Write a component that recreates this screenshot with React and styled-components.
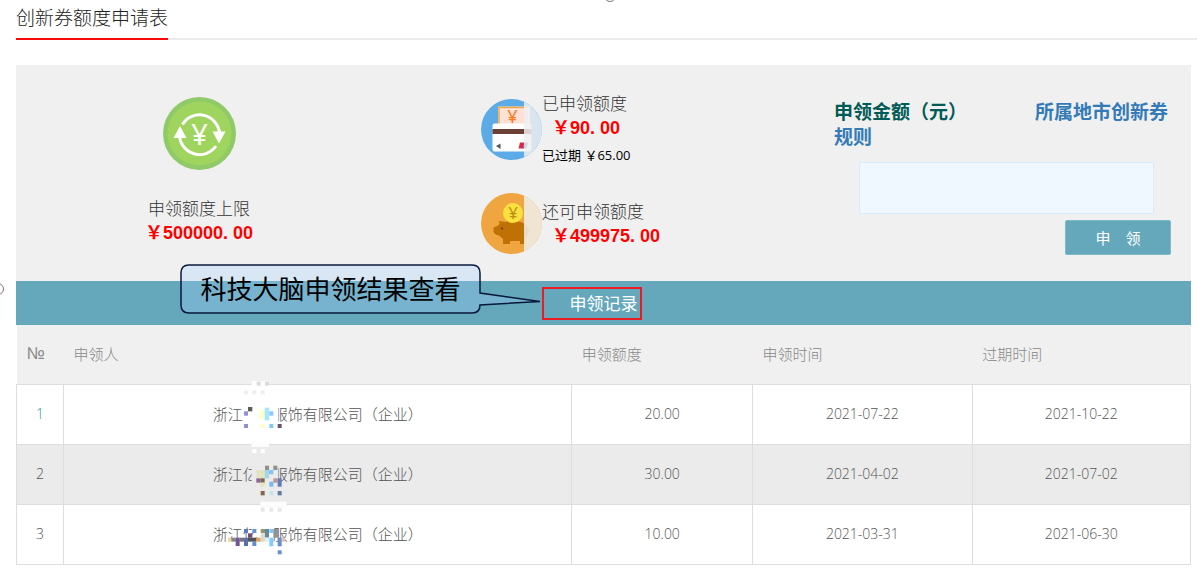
import React, { useState } from "react";
import styled, { createGlobalStyle } from "styled-components";

const records = [
    { id: 1, prefix: "浙江", hidden: 2, amount: "20.00", applied: "2021-07-22", expires: "2021-10-22" },
    { id: 2, prefix: "浙江亿", hidden: 1, amount: "30.00", applied: "2021-04-02", expires: "2021-07-02" },
    { id: 3, prefix: "浙江亿", hidden: 1, amount: "10.00", applied: "2021-03-31", expires: "2021-06-30" },
];

// pixel blocks that hide part of the company name: [x, y, width, height, colour]
const mosaics = {
    1: [
        [71, 0, 52, 18, "#fdfdfd"], [45, 74, 106, 68, "#ffffff"],
        [86, 2, 12, 12, "#dcdcdc"], [111, 2, 12, 12, "#dcdcdc"],
        [48, 28, 12, 12, "#efefef"], [73, 28, 12, 12, "#efefef"], [98, 28, 12, 12, "#efefef"],
        [60, 78, 13, 13, "#5c5c5c"], [48, 91, 12, 13, "#8f8fd4"],
        [86, 80, 12, 38, "#fffff0"], [98, 90, 12, 22, "#ffffc4"], [110, 80, 14, 38, "#a8e6ff"],
        [124, 91, 12, 13, "#86c8ff"], [48, 129, 12, 12, "#8f8fd4"], [98, 129, 12, 12, "#ffffc4"],
        [124, 129, 12, 12, "#7fc8ff"], [149, 129, 12, 12, "#67547c"], [71, 183, 52, 15, "#fdfdfd"],
    ],
    2: [
        [71, 0, 52, 14, "#fdfdfd"], [71, 70, 80, 64, "#ebebeb"],
        [73, 24, 12, 12, "#ffffff"], [98, 24, 12, 12, "#ffffff"],
        [111, 74, 12, 13, "#909090"], [136, 74, 12, 13, "#909090"], [85, 87, 25, 25, "#e4e4c0"],
        [110, 87, 13, 25, "#a5d6e8"], [123, 87, 13, 13, "#88c4f0"],
        [85, 112, 13, 13, "#8e6494"], [98, 112, 12, 13, "#7d6553"], [98, 125, 12, 12, "#e9e5b5"],
        [136, 112, 13, 13, "#bd9595"], [149, 112, 12, 25, "#657ab8"], [124, 122, 12, 15, "#75b9ee"],
        [98, 150, 12, 13, "#80664f"], [124, 150, 12, 13, "#c6e5e9"], [149, 150, 12, 13, "#5d7da1"],
        [98, 186, 77, 12, "#f8f8f8"],
    ],
    3: [
        [98, 2, 77, 14, "#fdfdfd"], [71, 76, 22, 12, "#fdfdfd"],
        [98, 20, 12, 12, "#e8e8e8"], [124, 20, 12, 12, "#e8e8e8"], [149, 20, 12, 12, "#e8e8e8"],
        [48, 84, 12, 12, "#587cc0"], [73, 84, 12, 12, "#6b91d4"], [98, 84, 13, 12, "#939776"],
        [111, 84, 12, 26, "#648999"], [124, 84, 12, 12, "#7cc8ff"], [136, 84, 14, 26, "#929292"],
        [60, 97, 13, 13, "#714d79"], [0, 110, 10, 12, "#f2d596"], [10, 110, 13, 12, "#858585"],
        [23, 110, 12, 25, "#71549a"], [35, 110, 13, 12, "#777779"], [48, 110, 12, 25, "#596faf"],
        [60, 110, 25, 12, "#535353"], [73, 122, 12, 13, "#648cd0"], [85, 110, 13, 12, "#e59d58"],
        [98, 97, 13, 25, "#dcdacb"], [111, 110, 13, 12, "#e3eef5"], [124, 110, 12, 26, "#83cbff"],
        [149, 110, 12, 26, "#688dd0"], [161, 110, 10, 12, "#e9c1a5"], [149, 148, 12, 12, "#6a8fcf"],
    ],
};

const Mosaic = ({ id, hidden }) => (
    <Hidden $chars={hidden}>
        <MosaicSvg $chars={hidden} viewBox="0 0 192 198" aria-hidden="true">
            {mosaics[id].map(([x, y, w, h, fill], index) => (
                <rect key={index} x={x} y={y} width={w} height={h} fill={fill} />
            ))}
        </MosaicSvg>
    </Hidden>
);

const LimitIcon = () => (
    <svg width="73" height="73" viewBox="0 0 73 73" aria-hidden="true">
        <circle cx="36.5" cy="36.5" r="36.5" fill="#90c968" />
        <circle cx="36.5" cy="36.5" r="32" fill="#9fd55e" />
        <g fill="none" stroke="#fff" strokeWidth="3">
            <path d="M19.5 27.5A20 20 0 0 1 56.5 36" />
            <path d="M16.7 40A20 20 0 0 0 53 49" />
        </g>
        <path d="M17 29L23.5 41H10.5Z M49.5 34.5H62.5L56 46.5Z" fill="#fff" />
        <text x="36.5" y="48" textAnchor="middle" fontFamily="Noto Sans" fontSize="29" fill="#fff">¥</text>
    </svg>
);

const CardIcon = () => (
    <svg width="61" height="61" viewBox="0 0 61 61" aria-hidden="true">
        <circle cx="30.5" cy="30.5" r="30.5" fill="#5dabe6" />
        <rect x="17" y="7.500" width="32" height="20" fill="#fbe9df" />
        <path d="M18 26V8.500H48" fill="none" stroke="#f3a53f" strokeWidth="1.500" />
        <rect x="20" y="10.500" width="27" height="15" fill="#fde0d6" />
        <text x="31.500" y="24" textAnchor="middle" fontFamily="Noto Sans" fontSize="18" fill="#ff7a1f">¥</text>
        <rect x="11.500" y="24.500" width="39" height="28" rx="2" fill="#fff" />
        <rect x="11.500" y="30" width="39" height="5" fill="#6b4036" />
        <path d="M15 47L19.500 44.500V50Z" fill="#555" />
        <path d="M39 43.500H43.500L42 49.500H37.500Z" fill="#dc2744" />
        <path d="M43.500 43.500H47L45 49.500H42Z" fill="#235494" />
        <path d="M43 2.700A30.500 30.500 0 0 1 43 58.300Z" fill="#f0f0f0" opacity="0.84" />
    </svg>
);

const PigIcon = () => (
    <svg width="61" height="61" viewBox="0 0 61 61" aria-hidden="true">
        <circle cx="30.5" cy="30.5" r="30.5" fill="#f0a640" />
        <g fill="#c07106">
            <path d="M18 28L24 29Q28 27.500 34 28Q45 29 46.500 35Q49 41 44 46V51H39V48H29V51H22V46L18 42.500Q14 42 12.500 39V34.500Q16 34 18.500 31Z" />
            <circle cx="46" cy="38" r="2" />
        </g>
        <circle cx="21" cy="35.500" r="1.200" fill="#7f4800" />
        <circle cx="32" cy="20" r="10" fill="#fbe13f" />
        <text x="32" y="26" textAnchor="middle" fontFamily="Noto Sans" fontSize="17" fill="#c08b13">¥</text>
        <path d="M43 2.700A30.500 30.500 0 0 1 43 58.300Z" fill="#f0f0f0" opacity="0.84" />
    </svg>
);

const App = () => {
    const [amount, setAmount] = useState("");

    const handleSubmit = (e) => {
        e.preventDefault();
    };

    return (
        <>
            <GlobalStyle />
            <Page>
                <Header>
                    <Title>创新券额度申请表</Title>
                </Header>
                <Main>
                    <Summary>
                        <Limit>
                            <LimitIcon />
                            <LimitText>
                                <Caption>申领额度上限</Caption>
                                <Money>￥500000. 00</Money>
                            </LimitText>
                        </Limit>
                        <Quotas>
                            <Quota>
                                <CardIcon />
                                <div>
                                    <Caption>已申领额度</Caption>
                                    <Money $indent>￥90. 00</Money>
                                    <Expired>已过期 ￥65.00</Expired>
                                </div>
                            </Quota>
                            <Quota>
                                <PigIcon />
                                <div>
                                    <Caption>还可申领额度</Caption>
                                    <Money $indent>￥499975. 00</Money>
                                </div>
                            </Quota>
                        </Quotas>
                        <Form onSubmit={handleSubmit}>
                            <FormTitle>
                                <label htmlFor="amount">申领金额（元）</label>
                                <RuleLink href="#rules">
                                    <span>所属地市创新券</span>
                                    <span>规则</span>
                                </RuleLink>
                            </FormTitle>
                            <AmountInput
                                id="amount"
                                type="text"
                                value={amount}
                                onChange={(e) => setAmount(e.target.value)}
                            />
                            <SubmitButton type="submit">申&emsp;领</SubmitButton>
                        </Form>
                    </Summary>
                    <Band>
                        <BandTitle>申领记录</BandTitle>
                        <Callout>
                            <CalloutShape viewBox="0 0 361 50" aria-hidden="true">
                                <path
                                    d="M9 1H292Q300 1 300 9V29L360 37.500L300 41Q300 49 292 49H9Q1 49 1 41V9Q1 1 9 1Z"
                                    fill="rgba(161, 208, 255, 0.29)"
                                    stroke="#081a3c"
                                    strokeWidth="1.500"
                                />
                            </CalloutShape>
                            <CalloutText>科技大脑申领结果查看</CalloutText>
                        </Callout>
                    </Band>
                    <Table>
                        <colgroup>
                            <Col $width={4} />
                            <Col />
                            <Col $width={15.4} />
                            <Col $width={18.7} />
                            <Col $width={18.6} />
                        </colgroup>
                        <thead>
                            <tr>
                                <Th $latin>№</Th>
                                <Th>申领人</Th>
                                <Th>申领额度</Th>
                                <Th>申领时间</Th>
                                <Th>过期时间</Th>
                            </tr>
                        </thead>
                        <tbody>
                            {records.map((record) => (
                                <Row key={record.id}>
                                    <Td $first={record.id === 1}>{record.id}</Td>
                                    <Td $name>
                                        {record.prefix}
                                        <Mosaic id={record.id} hidden={record.hidden} />
                                        服饰有限公司（企业）
                                    </Td>
                                    <Td>{record.amount}</Td>
                                    <Td>{record.applied}</Td>
                                    <Td>{record.expires}</Td>
                                </Row>
                            ))}
                        </tbody>
                    </Table>
                </Main>
                <StrayMark $top={-10} $left="-10px" />
                <StrayMark $top={-10} $left="calc(50% + 5px)" />
                <StrayMark $top={283} $left="-8px" />
            </Page>
        </>
    );
};

const GlobalStyle = createGlobalStyle`
  * {
    box-sizing: border-box;
  }

  body {
    margin: 0;
    background: #fff;
    font-family: "Open Sans", "Noto Sans CJK SC", sans-serif;
  }
`;

const Page = styled.div`
  position: relative;
  overflow: hidden;
  padding-left: 16px;
`;

const Header = styled.header`
  display: flex;
  border-bottom: 2px solid #ececec;
`;

const Title = styled.h1`
  margin: 0 0 -2px;
  padding-bottom: 2px;
  border-bottom: 2px solid #f80808;
  color: #222;
  font-size: 19px;
  font-weight: 300;
  line-height: 36px;
`;

const Main = styled.main`
  margin: 25px 6px 0 0;
`;

const Summary = styled.section`
  display: grid;
  grid-template-columns: 366fr 452fr 357fr;
  padding: 26px 0;
  background: #f0f0f0;
`;

const Limit = styled.div`
  display: flex;
  flex-direction: column;
  align-items: center;
  gap: 26px;
  padding-top: 6px;
`;

const LimitText = styled.div`
  text-align: center;
`;

const Caption = styled.div`
  color: #333;
  font-size: 17px;
  font-weight: 300;
  line-height: 25px;
`;

const Money = styled.div`
  padding-left: ${({ $indent }) => ($indent ? "10px" : "0")};
  color: #ff0000;
  font-family: "Liberation Sans", "Noto Sans CJK SC", sans-serif;
  font-size: 18px;
  font-weight: bold;
  line-height: 25px;
`;

const Expired = styled.div`
  margin-top: 2px;
  color: #000;
  font-size: 13px;
  line-height: 25px;
`;

const Quotas = styled.div`
  display: flex;
  flex-direction: column;
  gap: 25px;
  padding-left: 99px;
`;

const Quota = styled.div`
  display: flex;
  align-items: center;
`;

const Form = styled.form`
  display: flex;
  flex-direction: column;
  padding: 9px 20px 0 0;
`;

const FormTitle = styled.div`
  margin-right: -8px;
  color: #005a55;
  font-size: 19px;
  font-weight: bold;
  line-height: 25px;
`;

const RuleLink = styled.a`
  margin-left: 68px;
  color: #337ab7;
  text-decoration: none;

  span {
    display: inline-block;
  }
`;

const AmountInput = styled.input`
  height: 52px;
  margin: 12px 17px 6px 25px;
  padding: 0 12px;
  border: 1px solid #d9eafa;
  border-radius: 2px;
  background: #f0f8ff;
  font-size: 15px;
`;

const SubmitButton = styled.button`
  align-self: flex-end;
  width: 106px;
  height: 35px;
  border: 1px solid #7fb9c9;
  border-radius: 2px;
  background: #66a8bb;
  color: #fff;
  font-family: inherit;
  font-size: 15px;
  cursor: pointer;
`;

const Band = styled.div`
  position: relative;
  display: flex;
  align-items: center;
  justify-content: center;
  height: 44px;
  background: #66a8bb;
`;

const BandTitle = styled.h2`
  position: relative;
  margin: 0;
  color: #fff;
  font-size: 17px;
  font-weight: 400;
  line-height: 25px;

  &::after {
    content: "";
    position: absolute;
    inset: -4px -4px -4px -28px;
    border: 2px solid #ec1c24;
  }
`;

const Callout = styled.div`
  position: absolute;
  top: -17px;
  right: calc(50% + 63px);
  width: 361px;
  height: 50px;
`;

const CalloutShape = styled.svg`
  position: absolute;
  inset: 0;
`;

const CalloutText = styled.div`
  position: relative;
  padding-left: 21px;
  color: #000;
  font-size: 26px;
  line-height: 50px;
`;

const Table = styled.table`
  width: 100%;
  border-collapse: collapse;
  table-layout: fixed;
  color: #777;
  font-weight: 300;
`;

const Col = styled.col`
  width: ${({ $width }) => ($width ? `${$width}%` : "auto")};
`;

const Th = styled.th`
  height: 59px;
  padding: 0 10px;
  background: #f0f0f0;
  color: #888;
  font-family: ${({ $latin }) => ($latin ? '"Liberation Sans", sans-serif' : "inherit")};
  font-size: ${({ $latin }) => ($latin ? "17px" : "15px")};
  font-weight: 300;
  line-height: 20px;
  text-align: left;
`;

const Row = styled.tr`
  background: #fff;

  &:nth-child(even) {
    background: #ebebeb;
  }
`;

const Td = styled.td`
  position: relative;
  height: 60px;
  padding: 0;
  border: 1px solid #dedede;
  color: ${({ $first }) => ($first ? "#3c8dab" : "#555")};
  font-size: ${({ $name }) => ($name ? "15px" : "14px")};
  line-height: 20px;
  text-align: center;
`;

const Hidden = styled.span`
  position: relative;
  display: inline-block;
  width: ${({ $chars }) => $chars * 15}px;
  height: 20px;
  vertical-align: top;
`;

const MosaicSvg = styled.svg`
  position: absolute;
  top: -23px;
  left: ${({ $chars }) => ($chars === 2 ? "-15px" : "-30px")};
  width: 64px;
  height: 66px;
`;

const StrayMark = styled.span`
  position: absolute;
  top: ${({ $top }) => $top}px;
  left: ${({ $left }) => $left};
  width: 12px;
  height: 12px;
  border: 1px solid #777;
  border-radius: 50%;
`;

export default App;
